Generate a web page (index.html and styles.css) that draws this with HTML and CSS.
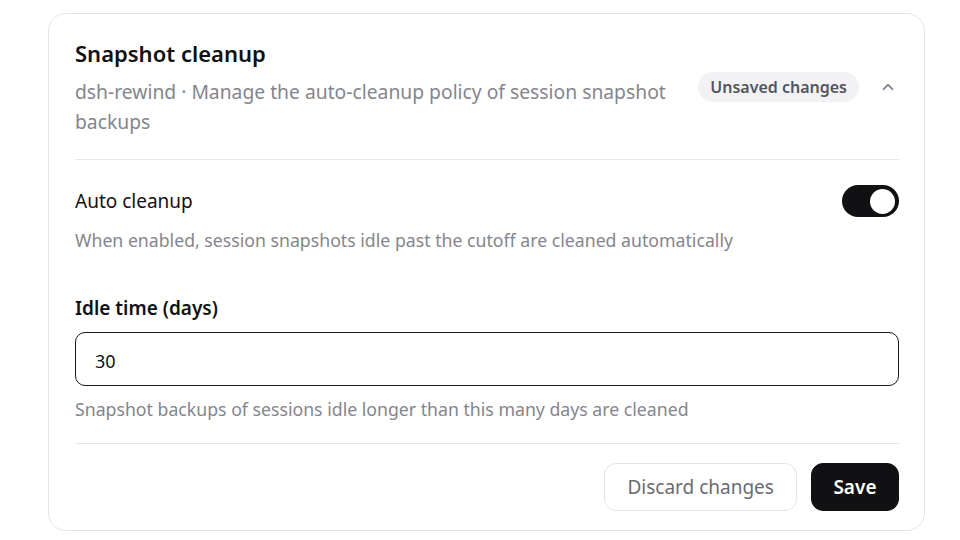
FILE: index.html
```html
<!DOCTYPE html>
<html>
<head>
<meta charset="utf-8">
<link rel="stylesheet" href="styles.css">
</head>
<body>
<div class="card">
  <div class="header">
    <div class="head-text">
      <h1 class="title">Snapshot cleanup</h1>
      <p class="subtitle">dsh-rewind · Manage the auto-cleanup policy of session snapshot backups</p>
    </div>
    <div class="head-actions">
      <span class="badge">Unsaved changes</span>
      <svg class="chevron" width="18" height="18" viewBox="0 0 24 24" fill="none" stroke="#6b7280" stroke-width="2.2" stroke-linecap="round" stroke-linejoin="round"><path d="M6 15l6-6 6 6"/></svg>
    </div>
  </div>
  <div class="section">
    <div class="row">
      <span class="label">Auto cleanup</span>
      <span class="toggle"><span class="knob"></span></span>
    </div>
    <p class="help help-toggle">When enabled, session snapshots idle past the cutoff are cleaned automatically</p>
    <label class="field-label">Idle time (days)</label>
    <div class="input">30</div>
    <p class="help help-input">Snapshot backups of sessions idle longer than this many days are cleaned</p>
  </div>
  <div class="footer">
    <button class="btn btn-secondary">Discard changes</button>
    <button class="btn btn-primary">Save</button>
  </div>
</div>
</body>
</html>
```
FILE: styles.css
```css
* { box-sizing: border-box; }
html, body { margin: 0; padding: 0; background: #fff; }
body {
  font-family: "Noto Sans", "Open Sans", sans-serif;
  color: #111114;
  padding: 13px 36px 0 48px;
}
.card {
  width: 877px;
  border: 1px solid #e3e3ea;
  border-radius: 18px;
  padding: 24px 25px 19px 26px;
  background: #fff;
}
.header {
  display: flex;
  align-items: flex-start;
  gap: 24px;
  padding-bottom: 22px;
  border-bottom: 1px solid #e6e6ec;
}
.head-text { flex: 1; }
.title {
  margin: 0;
  font-size: 22px;
  font-weight: 600;
  line-height: 30px;
  color: #111114;
}
.subtitle {
  margin: 9px 0 0;
  font-size: 19.3px;
  line-height: 30px;
  color: #85858d;
}
.head-actions {
  display: flex;
  align-items: center;
  gap: 20px;
  margin-top: 34px;
}
.badge {
  background: #f2f2f4;
  color: #55555d;
  font-size: 16px;
  font-weight: 600;
  border-radius: 15px;
  padding: 0 12px;
  height: 30px;
  line-height: 30px;
  white-space: nowrap;
}
.chevron { margin-right: 2px; }
.section { padding-top: 25px; }
.row {
  display: flex;
  align-items: center;
  justify-content: space-between;
}
.label { font-size: 19px; line-height: 32px; }
.toggle {
  width: 57px;
  height: 32px;
  border-radius: 16px;
  background: #111114;
  display: flex;
  align-items: center;
  justify-content: flex-end;
  padding-right: 4px;
}
.knob {
  width: 25px;
  height: 25px;
  border-radius: 50%;
  background: #fff;
}
.help {
  margin: 0;
  font-size: 17.7px;
  line-height: 24px;
  color: #85858d;
}
.help-toggle { margin-top: 11px; }
.field-label {
  display: block;
  margin-top: 43px;
  font-size: 19px;
  font-weight: 600;
  line-height: 26px;
}
.input {
  margin-top: 11px;
  height: 54px;
  border: 1px solid #18181b;
  border-radius: 10px;
  padding: 3px 19px 0;
  display: flex;
  align-items: center;
  font-size: 18px;
}
.help-input { margin-top: 11px; }
.footer {
  display: flex;
  justify-content: flex-end;
  gap: 14px;
  margin-top: 22px;
  padding-top: 19px;
  border-top: 1px solid #e6e6ec;
}
.btn {
  font-family: inherit;
  font-size: 19px;
  height: 48px;
  border-radius: 12px;
  padding: 0 22px;
  cursor: pointer;
}
.btn-secondary {
  background: #fff;
  border: 1px solid #e3e3ea;
  color: #6b6b73;
}
.btn-primary {
  background: #111114;
  border: 1px solid #111114;
  color: #fff;
  font-weight: 600;
  padding: 0 21.5px;
}
```
